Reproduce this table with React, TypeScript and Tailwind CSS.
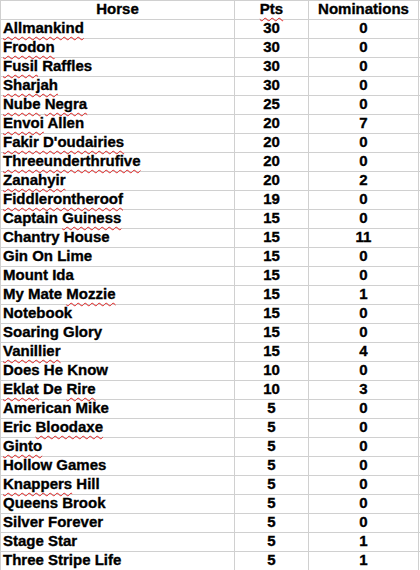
import React from "react";

type Row = { name: React.ReactNode; pts: number; nom: number };

const W = ({ children }: { children: React.ReactNode }) => (
  <span className="underline decoration-wavy decoration-[#e02020] decoration-1 underline-offset-[3px]">
    {children}
  </span>
);

const rows: Row[] = [
  { name: <W>Allmankind</W>, pts: 30, nom: 0 },
  { name: <W>Frodon</W>, pts: 30, nom: 0 },
  { name: <><W>Fusil</W> Raffles</>, pts: 30, nom: 0 },
  { name: <W>Sharjah</W>, pts: 30, nom: 0 },
  { name: <><W>Nube</W> <W>Negra</W></>, pts: 25, nom: 0 },
  { name: <><W>Envoi</W> Allen</>, pts: 20, nom: 7 },
  { name: <W>Fakir D'oudairies</W>, pts: 20, nom: 0 },
  { name: <W>Threeunderthrufive</W>, pts: 20, nom: 0 },
  { name: <W>Zanahyir</W>, pts: 20, nom: 2 },
  { name: <W>Fiddlerontheroof</W>, pts: 19, nom: 0 },
  { name: <>Captain <W>Guiness</W></>, pts: 15, nom: 0 },
  { name: "Chantry House", pts: 15, nom: 11 },
  { name: "Gin On Lime", pts: 15, nom: 0 },
  { name: "Mount Ida", pts: 15, nom: 0 },
  { name: <>My Mate <W>Mozzie</W></>, pts: 15, nom: 1 },
  { name: "Notebook", pts: 15, nom: 0 },
  { name: "Soaring Glory", pts: 15, nom: 0 },
  { name: <W>Vanillier</W>, pts: 15, nom: 4 },
  { name: "Does He Know", pts: 10, nom: 0 },
  { name: <><W>Eklat</W> De <W>Rire</W></>, pts: 10, nom: 3 },
  { name: "American Mike", pts: 5, nom: 0 },
  { name: <>Eric <W>Bloodaxe</W></>, pts: 5, nom: 0 },
  { name: <W>Ginto</W>, pts: 5, nom: 0 },
  { name: "Hollow Games", pts: 5, nom: 0 },
  { name: <><W>Knappers</W> Hill</>, pts: 5, nom: 0 },
  { name: "Queens Brook", pts: 5, nom: 0 },
  { name: "Silver Forever", pts: 5, nom: 0 },
  { name: "Stage Star", pts: 5, nom: 1 },
  { name: "Three Stripe Life", pts: 5, nom: 1 },
];

function Line({
  a,
  b,
  c,
  header,
}: {
  a: React.ReactNode;
  b: React.ReactNode;
  c: React.ReactNode;
  header?: boolean;
}) {
  return (
    <div className="flex h-[19px] border-t border-[#d0d0d0]">
      <div
        className={`w-[235px] shrink-0 border-l border-r border-[#d0d0d0] leading-[16px] ${
          header ? "text-center" : "pl-[2px]"
        }`}
      >
        {a}
      </div>
      <div className="w-[74px] shrink-0 border-r border-[#d0d0d0] text-center leading-[16px]">
        {b}
      </div>
      <div className="w-[110px] shrink-0 border-r border-[#d0d0d0] text-center leading-[16px]">
        {c}
      </div>
    </div>
  );
}

export default function App() {
  return (
    <div
      className="w-[420px] h-[570px] overflow-hidden bg-white text-black font-bold text-[15px] [-webkit-text-stroke:0.35px_black]"
      style={{ fontFamily: '"Liberation Sans", Arial, sans-serif' }}
    >
      <Line header a="Horse" b={<W>Pts</W>} c="Nominations" />
      {rows.map((r, i) => (
        <Line key={i} a={r.name} b={r.pts} c={r.nom} />
      ))}
    </div>
  );
}
